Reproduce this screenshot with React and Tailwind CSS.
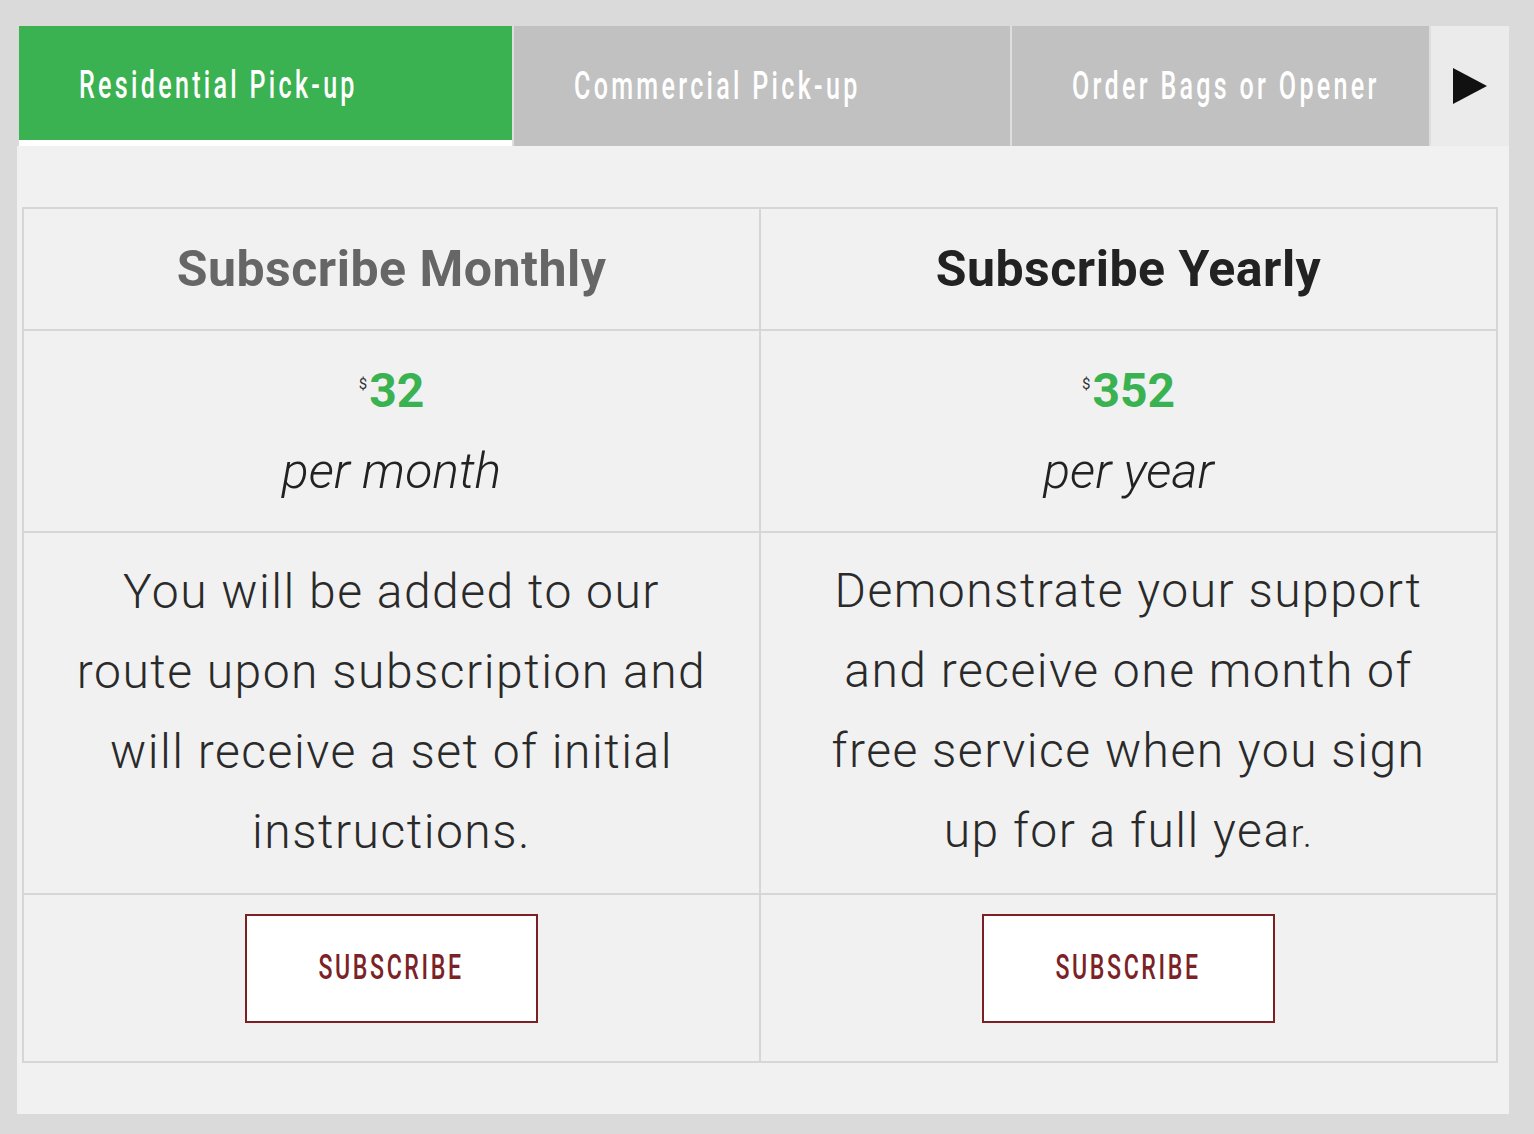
import { Fragment } from 'react';

const tabs = [
  { label: 'Residential Pick-up', width: 'w-[493px]', active: true },
  { label: 'Commercial Pick-up', width: 'w-[496px]', active: false },
  { label: 'Order Bags or Opener', width: 'w-[417px]', active: false }
];

const plans = [
  {
    title: 'Subscribe Monthly',
    titleColor: 'text-[#666666]',
    price: '32',
    period: 'per month',
    lines: ['You will be added to our', 'route upon subscription and', 'will receive a set of initial', 'instructions.']
  },
  {
    title: 'Subscribe Yearly',
    titleColor: 'text-[#222222]',
    price: '352',
    period: 'per year',
    lines: ['Demonstrate your support', 'and receive one month of', 'free service when you sign']
  }
];

const cell = 'flex flex-col items-center justify-center border-b-2 border-r-2 border-[#d6d6d6] text-center';

function CondensedText({ children, className }) {
  return (
    <span className={`inline-block origin-left scale-x-[0.66] whitespace-nowrap font-['Roboto',sans-serif] font-medium ${className}`}>
      {children}
    </span>
  );
}

export default function App() {
  return (
    <div className="min-h-screen bg-[#dadada] pt-[26px] font-['Roboto',sans-serif]">
      <nav className="ml-[19px] flex h-[120px] w-[1490px] gap-[2px] bg-[#dedede]">
        {tabs.map((tab) => (
          <div
            className={`${tab.width} flex items-center pl-[60px] ${tab.active ? 'border-b-[6px] border-white bg-[#3ab252] pt-[4px]' : 'bg-[#c1c1c1] pt-[1px]'}`}
            key={tab.label}
          >
            <CondensedText className="w-[600px] text-[38px] tracking-[5px] text-white">{tab.label}</CondensedText>
          </div>
        ))}
        <div className="flex w-[80px] items-center justify-center bg-[#ebebeb]">
          <svg width="34" height="36" viewBox="0 0 34 36" aria-hidden="true">
            <polygon points="0,0 34,18 0,36" fill="#111111" />
          </svg>
        </div>
      </nav>

      <section className="ml-[17px] w-[1492px] bg-[#f1f1f1] pb-[51px] pl-[5px] pr-[11px] pt-[61px]">
        <div className="grid grid-cols-2 border-l-2 border-t-2 border-[#d6d6d6]">
          {plans.map((plan) => (
            <div className={`${cell} h-[122px]`} key={`${plan.title}-title`}>
              <h2 className={`text-[50px] font-bold tracking-[0.5px] ${plan.titleColor}`}>{plan.title}</h2>
            </div>
          ))}

          {plans.map((plan) => (
            <div className={`${cell} h-[202px]`} key={`${plan.title}-price`}>
              <p className="flex h-[80px] items-center">
                <span className="mr-[2px] self-start pt-[22px] text-[15px] text-[#333333]">$</span>
                <span className="text-[48px] font-bold leading-none text-[#3ab252]">{plan.price}</span>
              </p>
              <p className="h-[80px] text-[50px] font-light italic leading-[80px] text-[#222222]">{plan.period}</p>
            </div>
          ))}

          {plans.map((plan, index) => (
            <div className={`${cell} h-[362px] pb-[2px]`} key={`${plan.title}-text`}>
              <p className="text-[48px] font-light leading-[80px] tracking-[1.5px] text-[#2a2a2a]">
                {plan.lines.map((line) => (
                  <Fragment key={line}>
                    {line}
                    <br />
                  </Fragment>
                ))}
                {index === 1 ? (
                  <>
                    up for a full yea<span className="text-[38px]">r.</span>
                  </>
                ) : null}
              </p>
            </div>
          ))}

          {plans.map((plan) => (
            <div className={`${cell} h-[168px] justify-start pt-[19px]`} key={`${plan.title}-button`}>
              <button
                className="flex h-[109px] w-[293px] items-center justify-center border-2 border-[#7b2025] bg-white"
                type="button"
              >
                <span className="inline-block origin-center scale-x-[0.66] font-['Roboto',sans-serif] text-[35px] font-medium tracking-[4px] text-[#7b2226]">
                  SUBSCRIBE
                </span>
              </button>
            </div>
          ))}
        </div>
      </section>
    </div>
  );
}
